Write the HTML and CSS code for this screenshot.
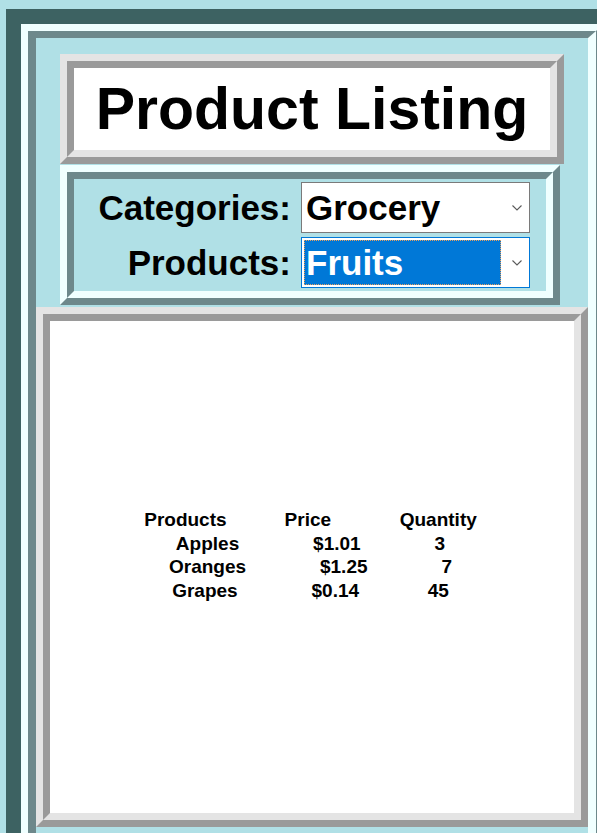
FILE: index.html
```
<!DOCTYPE html>
<html lang="en">
<head>
<meta charset="utf-8">
<title>Product Listing</title>
<link rel="stylesheet" href="styles.css">
</head>
<body>
<div class="frame">
  <div class="panel">
    <div class="panel-in">
      <div class="title-box">
        <div class="title-in">
          <h1 class="title">Product Listing</h1>
        </div>
      </div>
      <div class="filter-box">
        <div class="filter-in">
          <label class="lbl">Categories:</label>
          <div class="sel">
            <span class="sel-text">Grocery</span>
            <svg class="chev" viewBox="0 0 10 6" width="10" height="6"><polyline points="0.5,0.5 5,5 9.5,0.5" fill="none" stroke="#5a5a5a" stroke-width="1.1"/></svg>
          </div>
          <label class="lbl">Products:</label>
          <div class="sel sel-focus">
            <span class="sel-hl">Fruits</span>
            <svg class="chev" viewBox="0 0 10 6" width="10" height="6"><polyline points="0.5,0.5 5,5 9.5,0.5" fill="none" stroke="#5a5a5a" stroke-width="1.1"/></svg>
          </div>
        </div>
      </div>
      <div class="list-box">
        <div class="list-in">
          <div class="report">Products           Price             Quantity
Apples              $1.01              3
Oranges              $1.25              7
Grapes              $0.14             45</div>
        </div>
      </div>
    </div>
  </div>
</div>
</body>
</html>
```
FILE: styles.css
```
html {
  overflow: hidden;
}

body {
  margin: 0;
  background: #b0e0e6;
  font-family: "Liberation Sans", Arial, sans-serif;
  color: #000;
}

.frame {
  margin: 9px 0 0 6px;
  width: 582px;
  border: 15px solid #3d6262;
}

.panel {
  border: 7px solid;
  border-color: #f0ffff #6d888b #6d888b #f0ffff;
}

.panel-in {
  border-style: solid;
  border-width: 7px 8px 7px 8px;
  border-color: #6d888b #f0ffff #f0ffff #6d888b;
  background: #b0e0e6;
  padding: 16px 0 30px;
}

.title-box {
  margin-left: 24px;
  width: 504px;
  box-sizing: border-box;
  border: 7px solid;
  border-color: #e4e4e4 #9a9a9a #9a9a9a #e4e4e4;
}

.title-in {
  border: 7px solid;
  border-color: #9a9a9a #e4e4e4 #e4e4e4 #9a9a9a;
  background: #fff;
  height: 82px;
  display: flex;
  align-items: center;
  justify-content: center;
}

.title {
  margin: 0;
  font-size: 59px;
  font-weight: bold;
  line-height: 1;
}

.filter-box {
  margin: 1px 0 0 24px;
  width: 500px;
  box-sizing: border-box;
  border: 7px solid;
  border-color: #f0ffff #6d888b #6d888b #f0ffff;
}

.filter-in {
  border: 7px solid;
  border-color: #6d888b #f0ffff #f0ffff #6d888b;
  background: #b0e0e6;
  display: grid;
  grid-template-columns: 1fr 229px;
  column-gap: 10px;
  row-gap: 4px;
  padding: 3px 16px 3px 0;
}

.lbl {
  justify-self: end;
  align-self: center;
  font-size: 35px;
  font-weight: bold;
}

.sel {
  height: 51px;
  box-sizing: border-box;
  border: 1px solid #7a7a7a;
  background: #fff;
  display: flex;
  align-items: center;
  font-size: 35px;
  font-weight: bold;
}

.sel-text {
  flex: 1;
  padding-left: 4px;
}

.chev {
  flex: none;
  margin-right: 7px;
}

.sel.sel-focus {
  border-color: #0078d7;
  padding: 2px;
  align-items: stretch;
}

.sel-hl {
  width: 197px;
  box-sizing: border-box;
  background: #0078d7;
  color: #fff;
  border: 1px dotted #e8a060;
  padding-left: 1px;
  display: flex;
  align-items: center;
}

.sel-focus .chev {
  align-self: center;
  margin-left: auto;
  margin-right: 5px;
}

.list-box {
  margin-top: 2px;
  height: 520px;
  box-sizing: border-box;
  border: 7px solid;
  border-color: #e4e4e4 #9a9a9a #9a9a9a #e4e4e4;
}

.list-in {
  height: 100%;
  box-sizing: border-box;
  border: 7px solid;
  border-color: #9a9a9a #e4e4e4 #e4e4e4 #9a9a9a;
  background: #fff;
  display: flex;
  align-items: center;
  justify-content: center;
}

.report {
  white-space: pre;
  text-align: center;
  font-size: 19px;
  font-weight: bold;
  line-height: 23.5px;
  padding: 0 3px 23.5px 0;
}
```
